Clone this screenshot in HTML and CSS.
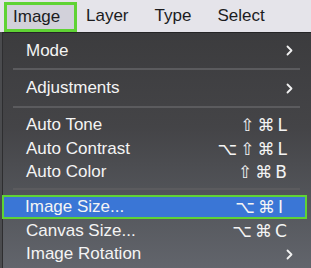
FILE: index.html
```html
<!DOCTYPE html>
<html>
<head>
<meta charset="utf-8">
<link rel="stylesheet" href="styles.css">
</head>
<body>
<div class="menubar">
  <span class="bar-item active">Image</span>
  <span class="bar-item layer">Layer</span>
  <span class="bar-item">Type</span>
  <span class="bar-item">Select</span>
</div>
<div class="menu">
  <div class="row h35"><span class="label">Mode</span><svg class="chev" width="7" height="11" viewBox="0 0 7 11"><path d="M1.5 1.5 L5.5 5.5 L1.5 9.5" fill="none" stroke="#f2f2f2" stroke-width="1.8" stroke-linecap="round" stroke-linejoin="round"/></svg></div>
  <div class="sep"></div>
  <div class="row h36"><span class="label">Adjustments</span><svg class="chev" width="7" height="11" viewBox="0 0 7 11"><path d="M1.5 1.5 L5.5 5.5 L1.5 9.5" fill="none" stroke="#f2f2f2" stroke-width="1.8" stroke-linecap="round" stroke-linejoin="round"/></svg></div>
  <div class="sep"></div>
  <div class="group">
    <div class="row h24"><span class="label">Auto Tone</span><span class="keys">⇧⌘L</span></div>
    <div class="row h23"><span class="label">Auto Contrast</span><span class="keys">⌥⇧⌘L</span></div>
    <div class="row h23"><span class="label">Auto Color</span><span class="keys">⇧⌘B</span></div>
  </div>
  <div class="sep"></div>
  <div class="group2">
    <div class="row selected"><span class="label">Image Size...</span><span class="keys">⌥⌘I</span></div>
    <div class="row h24"><span class="label">Canvas Size...</span><span class="keys">⌥⌘C</span></div>
    <div class="row h22"><span class="label">Image Rotation</span><svg class="chev" width="7" height="11" viewBox="0 0 7 11"><path d="M1.5 1.5 L5.5 5.5 L1.5 9.5" fill="none" stroke="#f2f2f2" stroke-width="1.8" stroke-linecap="round" stroke-linejoin="round"/></svg></div>
  </div>
</div>
</body>
</html>
```
FILE: styles.css
```css
html, body {
  margin: 0;
  padding: 0;
}
body {
  width: 311px;
  height: 268px;
  overflow: hidden;
  font-family: "Liberation Sans", Arial, sans-serif;
  font-size: 17px;
  background: #4a4b4e;
}
.menubar {
  height: 32px;
  background: #e5e4ea;
  display: flex;
  align-items: center;
  color: #1c1c1e;
}
.bar-item {
  margin-right: 26px;
  line-height: 20px;
}
.bar-item.active {
  box-sizing: border-box;
  margin-left: 4px;
  margin-right: 0;
  margin-top: 2px;
  width: 73px;
  height: 30px;
  padding-left: 6px;
  border: 3px solid #5fd334;
  background: #d2d1da;
  display: flex;
  align-items: center;
}
.bar-item.layer {
  margin-left: 9px;
}
.menu {
  height: 236px;
  border-top: 1px solid #252527;
  margin-left: 2px;
  border-left: 1px solid #2e2e30;
  background: linear-gradient(to bottom, #3c3c3e 0%, #444447 40%, #53555a 70%, #62656c 100%);
  color: #f4f4f4;
}
.row {
  display: flex;
  align-items: center;
  justify-content: space-between;
  padding-left: 23px;
  padding-right: 24px;
  box-sizing: border-box;
}
.h35 { height: 35px; }
.h36 { height: 36px; }
.h24 { height: 24px; }
.h23 { height: 23px; }
.h22 { height: 22px; }
.chev {
  margin-right: -6px;
}
.keys {
  font-family: "DejaVu Sans", "Liberation Sans", sans-serif;
  font-size: 17px;
  letter-spacing: 3px;
  margin-right: -3px;
}
.sep {
  height: 2px;
  margin: 0 11px 0 10px;
  background: #5b5b5e;
}
.group {
  padding: 5px 0 5px;
}
.group2 {
  padding-top: 5px;
}
.selected {
  height: 24px;
  margin-left: -1px;
  margin-right: 4px;
  padding-left: 21px;
  padding-right: 22px;
  border: 2px solid #5fd334;
  background: #3a76d6;
}
```
